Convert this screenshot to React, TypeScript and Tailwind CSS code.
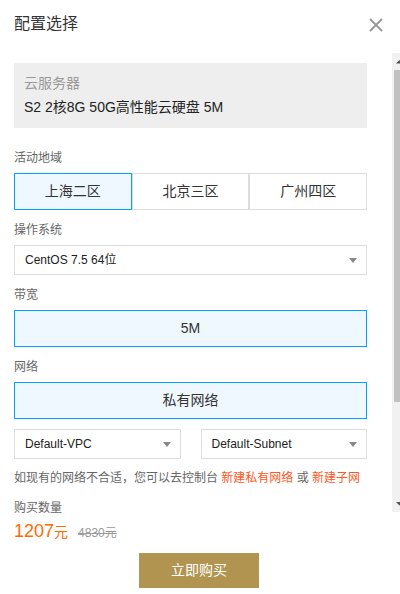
import React from "react";

function Caret() {
  return (
    <svg width="8" height="5" viewBox="0 0 8 5" className="shrink-0">
      <path d="M0 0 L8 0 L4 5 Z" fill="#888" />
    </svg>
  );
}

function FakeSelect({ label }: { label: string }) {
  return (
    <div className="h-[30px] border border-[#dddddd] bg-white flex items-center justify-between pl-[10px] pr-[9px]">
      <span className="text-[12px] leading-[20px] text-[#222]">{label}</span>
      <Caret />
    </div>
  );
}

function Label({ children, className = "" }: { children: React.ReactNode; className?: string }) {
  return <div className={`text-[12px] leading-[20px] text-[#666] ${className}`}>{children}</div>;
}

export default function App() {
  const regions = ["上海二区", "北京三区", "广州四区"];
  return (
    <div className="w-[400px] h-[594px] bg-white flex overflow-hidden font-['Liberation_Sans','Noto_Sans_CJK_SC',sans-serif]">
      <div className="w-[392px] flex flex-col pl-[14px]">
        <div className="flex items-start justify-between pt-[12px] pr-[9px]">
          <div className="text-[16px] leading-[24px] text-[#333]">配置选择</div>
          <svg width="14" height="14" viewBox="0 0 14 14" className="mt-[6px]">
            <path d="M1 1 L13 13 M13 1 L1 13" stroke="#999" strokeWidth="2" />
          </svg>
        </div>

        <div className="w-[353px] flex flex-col">
          <div className="mt-[27px] h-[65px] bg-[#eeeeee] px-[10px] pt-[10px]">
            <div className="text-[14px] leading-[20px] text-[#999]">云服务器</div>
            <div className="mt-[4px] text-[14px] leading-[20px] text-[#222]">S2 2核8G 50G高性能云硬盘 5M</div>
          </div>

          <Label className="mt-[20px]">活动地域</Label>
          <div className="mt-[5px] grid grid-cols-3">
            {regions.map((r, i) => (
              <div
                key={r}
                className={
                  i === 0
                    ? "h-[37px] flex items-center justify-center border border-[#00a4ff] bg-[#f0f8ff] text-[14px] text-[#333]"
                    : "h-[37px] flex items-center justify-center border border-[#dddddd] bg-white text-[14px] text-[#333]"
                }
              >
                {r}
              </div>
            ))}
          </div>

          <Label className="mt-[10px]">操作系统</Label>
          <div className="mt-[5px]">
            <FakeSelect label="CentOS 7.5 64位" />
          </div>

          <Label className="mt-[10px]">带宽</Label>
          <div className="mt-[5px] h-[37px] flex items-center justify-center border border-[#00a4ff] bg-[#f0f8ff] text-[14px] text-[#333]">
            5M
          </div>

          <Label className="mt-[10px]">网络</Label>
          <div className="mt-[5px] h-[37px] flex items-center justify-center border border-[#00a4ff] bg-[#f0f8ff] text-[14px] text-[#333]">
            私有网络
          </div>

          <div className="mt-[10px] grid grid-cols-2 gap-x-[20px]">
            <FakeSelect label="Default-VPC" />
            <FakeSelect label="Default-Subnet" />
          </div>

          <div className="mt-[9px] text-[12px] leading-[20px] text-[#666] whitespace-nowrap">
            如现有的网络不合适，您可以去控制台 <span className="text-[#ff5722]">新建私有网络</span> 或{" "}
            <span className="text-[#ff5722]">新建子网</span>
          </div>

          <Label className="mt-[10px]">购买数量</Label>
          <div className="mt-[1px] flex items-baseline">
            <span className="text-[18px] leading-[24px] text-[#ff6a00]">1207</span>
            <span className="text-[14px] leading-[24px] text-[#ff6a00]">元</span>
            <span className="ml-[10px] text-[12px] leading-[24px] text-[#999] line-through">4830元</span>
          </div>

          <button className="mt-[8px] ml-[125px] w-[120px] h-[35px] bg-[#b0944f] text-white text-[14px] flex items-center justify-center">
            立即购买
          </button>
        </div>
      </div>

      <div className="w-[8px] pt-[53px] overflow-hidden">
        <div className="h-[459px] w-[15px] bg-[#f1f1f1] flex flex-col">
          <svg width="15" height="15" viewBox="0 0 15 15" className="shrink-0">
            <path d="M4 10.5 L11 10.5 L7.5 7 Z" fill="#505050" />
          </svg>
          <div className="mt-[2px] ml-[2px] w-[11px] h-[332px] bg-[#c1c1c1]" />
          <div className="flex-1" />
          <svg width="15" height="15" viewBox="0 0 15 15" className="shrink-0">
            <path d="M4 5 L11 5 L7.5 8.5 Z" fill="#505050" />
          </svg>
        </div>
      </div>
    </div>
  );
}
